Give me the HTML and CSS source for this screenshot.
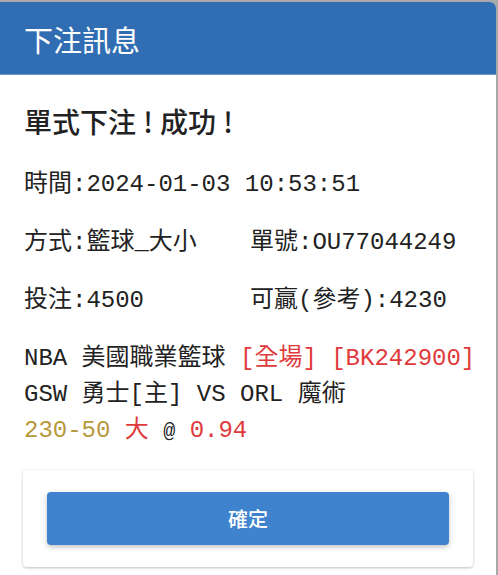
FILE: index.html
```html
<!DOCTYPE html>
<html lang="zh-Hant">
<head>
  <meta charset="UTF-8" />
  <meta name="viewport" content="width=device-width, initial-scale=1.0" />
  <title>下注訊息</title>
  <link rel="stylesheet" href="styles.css">
</head>
<body>
  <div class="dialog">
    <header class="dialog-head">
      <h1>下注訊息</h1>
    </header>

    <section class="dialog-body">
      <h2 class="result">單式下注<span class="bang">!</span>成功<span class="bang">!</span></h2>

      <div class="info">
        <div class="info-row full">時間:2024-01-03 10:53:51</div>
        <div class="info-row">方式:籃球_大小</div>
        <div class="info-row">單號:OU77044249</div>
        <div class="info-row">投注:4500</div>
        <div class="info-row">可贏(參考):4230</div>
      </div>

      <div class="detail">
        <div>NBA 美國職業籃球 <span class="red">[全場] [BK242900]</span></div>
        <div>GSW 勇士[主] VS ORL 魔術</div>
        <div><span class="gold">230-50</span> <span class="red">大</span> <span class="at">@</span> <span class="red">0.94</span></div>
      </div>

      <div class="actions">
        <button type="button">確定</button>
      </div>
    </section>
  </div>
</body>
</html>
```

FILE: styles.css
```css
body {
  margin: 0;
  padding: 0;
  background: #a8a8a8;
  font-family: "Noto Sans CJK TC", "Noto Sans", sans-serif;
}
.dialog {
  margin: 2px 2px 0 0;
  background: white;
  border-top-right-radius: 6px;
  height: 573px;
  overflow: hidden;
}
.dialog-head {
  background: #316db2;
  height: 73px;
  border-bottom: 1px solid #6b9bd3;
  padding: 2px 24px 0;
  box-sizing: border-box;
  display: flex;
  align-items: center;
}
.dialog-head h1 {
  margin: 0;
  color: white;
  font-size: 29px;
  font-weight: 400;
}
.dialog-body {
  padding: 0 24px;
  color: #222;
}
.result {
  margin: 26px 0 15px;
  font-size: 28px;
  line-height: 40px;
  font-weight: 500;
}
.result .bang {
  display: inline-block;
  width: 24px;
  text-align: center;
}
.info {
  display: grid;
  grid-template-columns: 226px 1fr;
  font-family: "Liberation Mono", "Noto Sans CJK TC", monospace;
  font-size: 24px;
}
.info-row {
  line-height: 58px;
  white-space: nowrap;
}
.info-row.full {
  grid-column: 1 / 3;
}
.detail {
  margin-top: 11px;
  font-family: "Liberation Mono", "Noto Sans CJK TC", monospace;
  font-size: 24px;
  line-height: 36px;
  white-space: nowrap;
}
.red {
  color: #e03a3c;
}
.gold {
  color: #b8983c;
}
.at {
  font-size: 20px;
}
.actions {
  margin: 20px -1px 0;
  padding: 22px 24px;
  border-radius: 4px;
  box-shadow: 0 1px 3px rgba(0, 0, 0, 0.25);
}
.actions button {
  display: block;
  width: 100%;
  height: 53px;
  border: none;
  border-radius: 4px;
  background: #3f82cd;
  color: white;
  font-family: "Noto Sans CJK TC", sans-serif;
  font-size: 20px;
  font-weight: 500;
  box-shadow: 0 2px 5px rgba(0, 0, 0, 0.25);
  cursor: pointer;
}
```
